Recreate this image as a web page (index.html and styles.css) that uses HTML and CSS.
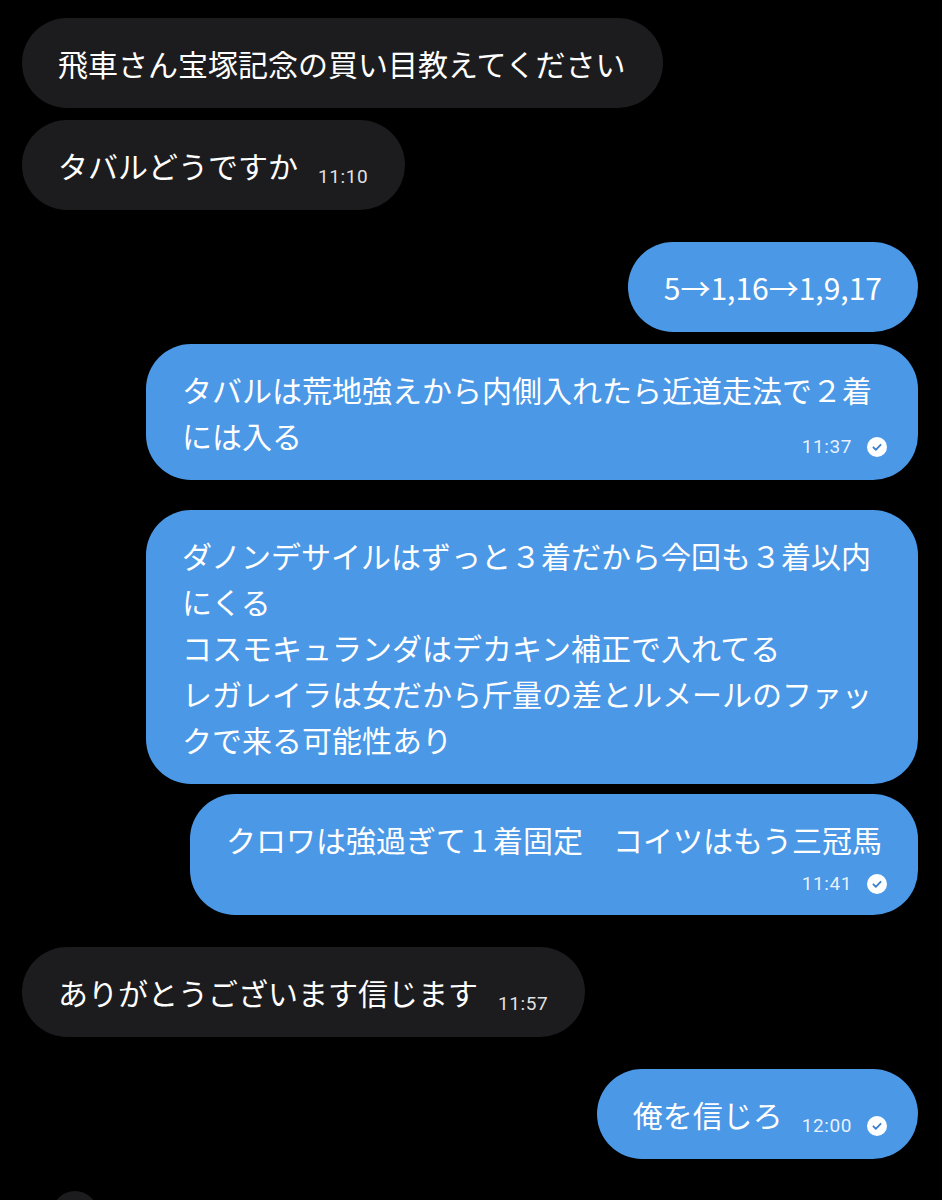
FILE: index.html
```html
<!DOCTYPE html>
<html lang="ja">
<head>
<meta charset="UTF-8">
<meta name="viewport" content="width=device-width, initial-scale=1.0">
<title>チャット</title>
<link rel="stylesheet" href="styles.css">
</head>
<body>
  <div class="chat">
    <div class="group">
      <div class="bubble in">飛車さん宝塚記念の買い目教えてください</div>
      <div class="bubble in">タバルどうですか<span class="meta">11:10</span></div>
    </div>

    <div class="group">
      <div class="bubble out">5→1,16→1,9,17</div>
      <div class="bubble out">タバルは荒地強えから内側入れたら近道走法で２着には入る<span class="meta">11:37<svg class="tick" viewBox="0 0 20 20"><circle cx="10" cy="10" r="10"/><path d="M6.4 10.3l2.4 2.5 4.8-5"/></svg></span></div>
    </div>

    <div class="group near">
      <div class="bubble out">ダノンデサイルはずっと３着だから今回も３着以内にくる<br>コスモキュランダはデカキン補正で入れてる<br>レガレイラは女だから斤量の差とルメールのファックで来る可能性あり</div>
      <div class="bubble out">クロワは強過ぎて<span class="num">1</span>着固定　コイツはもう三冠馬<span class="meta below">11:41<svg class="tick" viewBox="0 0 20 20"><circle cx="10" cy="10" r="10"/><path d="M6.4 10.3l2.4 2.5 4.8-5"/></svg></span></div>
    </div>

    <div class="group">
      <div class="bubble in">ありがとうございます信じます<span class="meta">11:57</span></div>
    </div>

    <div class="group">
      <div class="bubble out">俺を信じろ<span class="meta">12:00<svg class="tick" viewBox="0 0 20 20"><circle cx="10" cy="10" r="10"/><path d="M6.4 10.3l2.4 2.5 4.8-5"/></svg></span></div>
    </div>

    <div class="group">
      <div class="peek"></div>
    </div>
  </div>
</body>
</html>
```

FILE: styles.css
```css
body {
  margin: 0;
  background: #000;
  color: #fff;
  font-family: "Noto Sans CJK JP", "Noto Sans", sans-serif;
  overflow: hidden;
}
.chat {
  display: flex;
  flex-direction: column;
  gap: 32px;
  padding: 18px 24px 0 22px;
}
.group {
  display: flex;
  flex-direction: column;
  gap: 12px;
}
.group.near {
  gap: 10px;
  margin-top: -2px;
}
.bubble {
  display: flow-root;
  max-width: 772px;
  box-sizing: border-box;
  padding: 22px 36px;
  border-radius: 45px;
  font-size: 30px;
  line-height: 46px;
  word-break: break-all;
}
.bubble.in {
  align-self: flex-start;
  background: #1c1c1e;
  padding-right: 37px;
}
.bubble.out {
  align-self: flex-end;
  background: #4b98e7;
}
.num {
  display: inline-block;
  width: 0.9em;
  text-align: center;
}
.meta {
  float: right;
  display: flex;
  align-items: center;
  gap: 15px;
  margin: 25px 0 0 20px;
  height: 20px;
  font-family: Roboto, "Noto Sans", sans-serif;
  font-size: 19px;
  line-height: 20px;
  letter-spacing: 0.6px;
  color: rgba(255, 255, 255, 0.88);
}
.out .meta {
  margin-right: -5px;
  margin-left: 19px;
}
.meta.below {
  float: none;
  justify-content: flex-end;
  margin-top: 12px;
  margin-bottom: -1px;
}
.tick {
  width: 20px;
  height: 20px;
  flex: none;
}
.tick circle {
  fill: #fff;
}
.tick path {
  fill: none;
  stroke: #3d80cc;
  stroke-width: 1.8;
  stroke-linecap: round;
  stroke-linejoin: round;
}
.peek {
  width: 46px;
  height: 46px;
  margin-left: 30px;
  border-radius: 50%;
  background: #1c1c1e;
}
```
